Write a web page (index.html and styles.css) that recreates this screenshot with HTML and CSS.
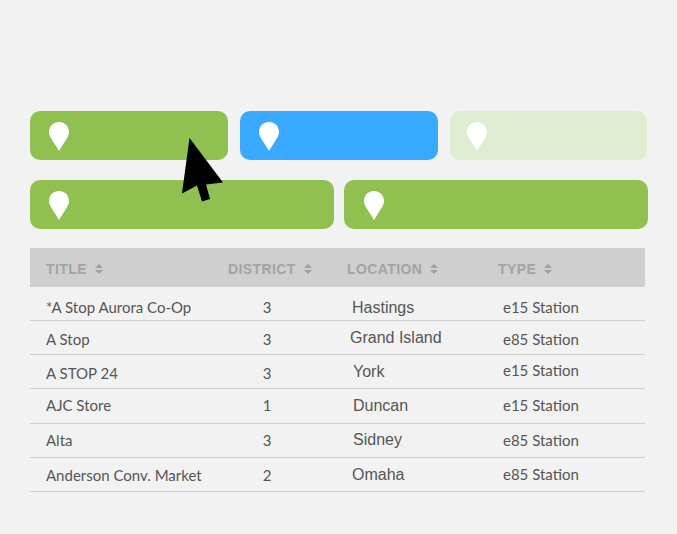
FILE: index.html
```html
<!DOCTYPE html>
<html lang="en">
<head>
<meta charset="utf-8">
<title>Stations</title>
<link rel="stylesheet" href="styles.css">
</head>
<body>
<svg class="defs" width="0" height="0" aria-hidden="true">
  <symbol id="pin" viewBox="0 0 20 29"><path d="M10 0C4.400 0 0 4.300 0 10c0 2 .6 3.700 1.600 5.400C3.900 19.500 7.800 24.700 10 29c2.200-4.300 6.100-9.500 8.400-13.600 1-1.700 1.600-3.400 1.600-5.400C20 4.300 15.600 0 10 0z"/></symbol>
  <symbol id="sort" viewBox="0 0 8 10"><path d="M4 0l4 4H0zM4 10L0 6h8z"/></symbol>
</svg>
<main class="page">
  <div class="tiles tiles-three">
    <div class="tile tile-green"><svg class="pin"><use href="#pin"/></svg></div>
    <div class="tile tile-blue"><svg class="pin"><use href="#pin"/></svg></div>
    <div class="tile tile-pale"><svg class="pin"><use href="#pin"/></svg></div>
  </div>
  <div class="tiles tiles-two">
    <div class="tile tile-green"><svg class="pin"><use href="#pin"/></svg></div>
    <div class="tile tile-green"><svg class="pin"><use href="#pin"/></svg></div>
  </div>
  <div class="table">
    <div class="head">
      <div class="th th-title">TITLE<svg class="sort"><use href="#sort"/></svg></div>
      <div class="th">DISTRICT<svg class="sort"><use href="#sort"/></svg></div>
      <div class="th">LOCATION<svg class="sort"><use href="#sort"/></svg></div>
      <div class="th">TYPE<svg class="sort"><use href="#sort"/></svg></div>
    </div>
    <div class="row">
      <div class="title down-3">*A Stop Aurora Co-Op</div><div class="district down-3">3</div>
      <div class="location down-4">Hastings</div><div class="type down-3">e15 Station</div>
    </div>
    <div class="row">
      <div class="title down-1">A Stop</div><div class="district down-1">3</div>
      <div class="location left-2">Grand Island</div><div class="type down-1">e85 Station</div>
    </div>
    <div class="row">
      <div class="title down-1">A STOP 24</div><div class="district down-1">3</div>
      <div class="location right-1">York</div><div class="type up-2">e15 Station</div>
    </div>
    <div class="row">
      <div class="title up-1">AJC Store</div><div class="district up-1">1</div>
      <div class="location right-1">Duncan</div><div class="type up-1">e15 Station</div>
    </div>
    <div class="row">
      <div class="title">Alta</div><div class="district">3</div>
      <div class="location right-1">Sidney</div><div class="type">e85 Station</div>
    </div>
    <div class="row">
      <div class="title down-1">Anderson Conv. Market</div><div class="district down-1">2</div>
      <div class="location down-1">Omaha</div><div class="type">e85 Station</div>
    </div>
  </div>
</main>
<svg class="cursor" viewBox="0 0 44 66" width="44" height="66" aria-hidden="true"><path d="M7.500 1L0 56.500 15 48.500 20 64.500 28 62 24 47.500 41 45.500z"/></svg>
</body>
</html>
```
FILE: styles.css
```css
html, body {
  margin: 0;
  height: 100%;
  background: #f2f2f2;
}

.defs {
  display: block;
  height: 0;
}

.page {
  box-sizing: border-box;
  width: 677px;
  height: 534px;
  padding: 111px 29px 0 30px;
  overflow: hidden;
}

.tiles {
  display: flex;
}

.tiles-three {
  gap: 12px;
  margin-bottom: 20px;
}

.tiles-three .tile {
  width: 198px;
}

.tiles-three .tile-pale {
  width: 197px;
  padding-left: 17px;
}

.tiles-two {
  gap: 10px;
  margin-bottom: 19px;
}

.tiles-two .tile {
  width: 304px;
}

.tile {
  box-sizing: border-box;
  height: 49px;
  padding: 11px 0 0 19px;
  border-radius: 10px;
}

.tiles-two .tile + .tile {
  padding-left: 20px;
}

.tile-green { background: #90c050; }
.tile-blue { background: #38a9ff; }
.tile-pale { background: #dfecd0; }

.pin {
  display: block;
  width: 20px;
  height: 29px;
  fill: #fff;
}

.table {
  width: 615px;
}

.head,
.row {
  display: grid;
  grid-template-columns: 198px 119px 151px 147px;
  align-items: center;
}

.head {
  height: 39px;
  background: #cfcfcf;
}

.th {
  display: flex;
  align-items: center;
  gap: 8px;
  padding-top: 2px;
  font: bold 14px "Liberation Sans", Arial, sans-serif;
  letter-spacing: 0.4px;
  color: #a3a3a3;
}

.th-title {
  padding-left: 16px;
}

.sort {
  width: 8px;
  height: 10px;
  fill: #a0a0a0;
}

.row {
  box-sizing: border-box;
  height: 34.170px;
  border-bottom: 1px solid #cdcdcd;
  font: 15px Lato, sans-serif;
  color: #555;
}

.title {
  padding-left: 16px;
}

.district {
  width: 78px;
  text-align: center;
}

.location {
  padding-left: 5px;
  font: 16px "Liberation Sans", Arial, sans-serif;
}

.type {
  padding-left: 5px;
}

.up-1 { padding-bottom: 2px; }
.up-2 { padding-bottom: 4px; }
.down-1 { padding-top: 2px; }
.down-3 { padding-top: 6px; }
.down-4 { padding-top: 8px; }
.left-2 { padding-left: 3px; }
.right-1 { padding-left: 6px; }

.cursor {
  position: absolute;
  left: 182px;
  top: 137px;
  fill: #000;
}
```
